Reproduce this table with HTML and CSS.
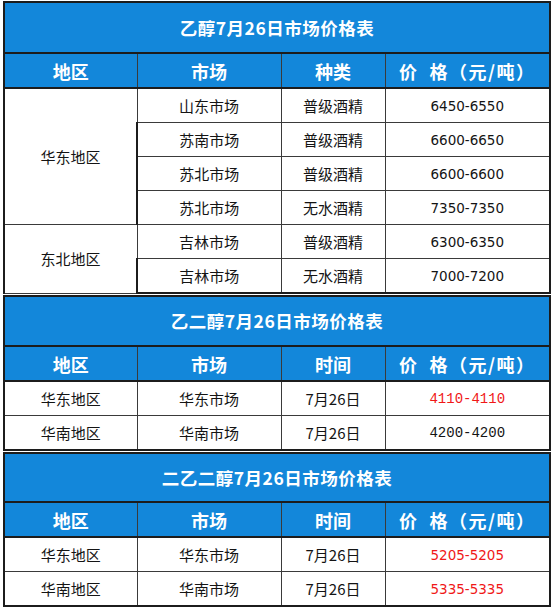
FILE: index.html
```html
<!DOCTYPE html>
<html lang="zh">
<head>
<meta charset="utf-8">
<title>价格表</title>
<link rel="stylesheet" href="styles.css">
</head>
<body>
<div class="page">
  <table class="sheet s1">
    <colgroup><col class="c1"><col class="c2"><col class="c3"><col class="c4"></colgroup>
    <tr class="title"><td colspan="4">乙醇7月26日市场价格表</td></tr>
    <tr class="head"><td>地区</td><td>市场</td><td>种类</td><td class="price">价&nbsp; 格（元/吨）</td></tr>
    <tr><td rowspan="4">华东地区</td><td>山东市场</td><td>普级酒精</td><td class="num">6450-6550</td></tr>
    <tr><td>苏南市场</td><td>普级酒精</td><td class="num">6600-6650</td></tr>
    <tr><td>苏北市场</td><td>普级酒精</td><td class="num">6600-6600</td></tr>
    <tr><td>苏北市场</td><td>无水酒精</td><td class="num">7350-7350</td></tr>
    <tr><td rowspan="2">东北地区</td><td>吉林市场</td><td>普级酒精</td><td class="num">6300-6350</td></tr>
    <tr><td>吉林市场</td><td>无水酒精</td><td class="num">7000-7200</td></tr>
  </table>
  <table class="sheet s2">
    <colgroup><col class="c1"><col class="c2"><col class="c3"><col class="c4"></colgroup>
    <tr class="title"><td colspan="4">乙二醇7月26日市场价格表</td></tr>
    <tr class="head"><td>地区</td><td>市场</td><td>时间</td><td class="price">价&nbsp; 格（元/吨）</td></tr>
    <tr><td>华东地区</td><td>华东市场</td><td>7月26日</td><td class="mono red">4110-4110</td></tr>
    <tr><td>华南地区</td><td>华南市场</td><td>7月26日</td><td class="mono">4200-4200</td></tr>
  </table>
  <table class="sheet s3">
    <colgroup><col class="c1"><col class="c2"><col class="c3"><col class="c4"></colgroup>
    <tr class="title"><td colspan="4">二乙二醇7月26日市场价格表</td></tr>
    <tr class="head"><td>地区</td><td>市场</td><td>时间</td><td class="price">价&nbsp; 格（元/吨）</td></tr>
    <tr><td>华东地区</td><td>华东市场</td><td>7月26日</td><td class="num red">5205-5205</td></tr>
    <tr><td>华南地区</td><td>华南市场</td><td>7月26日</td><td class="num red">5335-5335</td></tr>
  </table>
</div>
</body>
</html>
```
FILE: styles.css
```css
html, body {
  margin: 0;
  padding: 0;
  background: #ffffff;
}
.page {
  padding: 1px 0 0 3px;
  width: 546px;
  font-family: "Noto Sans CJK SC", "Liberation Sans", sans-serif;
}
.sheet {
  border-collapse: collapse;
  table-layout: fixed;
  width: 546px;
  color: #141414;
}
.c1 { width: 133px; }
.c2 { width: 144px; }
.c3 { width: 104px; }
.c4 { width: 165px; }
.sheet td {
  border: 1px solid #3a3a3a;
  text-align: center;
  vertical-align: middle;
  font-size: 15px;
  height: 33px;
  padding: 0;
  line-height: 16px;
}
.sheet .title td {
  background: #1387da;
  color: #ffffff;
  font-weight: bold;
  font-size: 17.5px;
  border: 2px solid #1c1c1c;
  height: 49px;
  letter-spacing: 0.5px;
}
.s2 .title td { height: 48px; }
.s3 .title td { height: 47px; }
.sheet .head td {
  background: #1387da;
  color: #ffffff;
  font-weight: bold;
  font-size: 18px;
  height: 33px;
  border-color: #3a3a3a;
  border-top: 2px solid #1c1c1c;
  border-bottom: 2px solid #1c1c1c;
}
.sheet .head td.price {
  letter-spacing: 1.5px;
}
.sheet tr:last-child td {
  border-bottom: 2px solid #1c1c1c;
}
.sheet td:first-child { border-left: 2px solid #1c1c1c; }
.sheet td:last-child { border-right: 2px solid #1c1c1c; }
.num {
  font-family: "DejaVu Sans", sans-serif;
  font-size: 13.5px !important;
}
.mono {
  font-family: "Liberation Mono", monospace;
  font-size: 14px !important;
}
.red { color: #f01818; }
.s2, .s3 { margin-top: 1px; }
```
